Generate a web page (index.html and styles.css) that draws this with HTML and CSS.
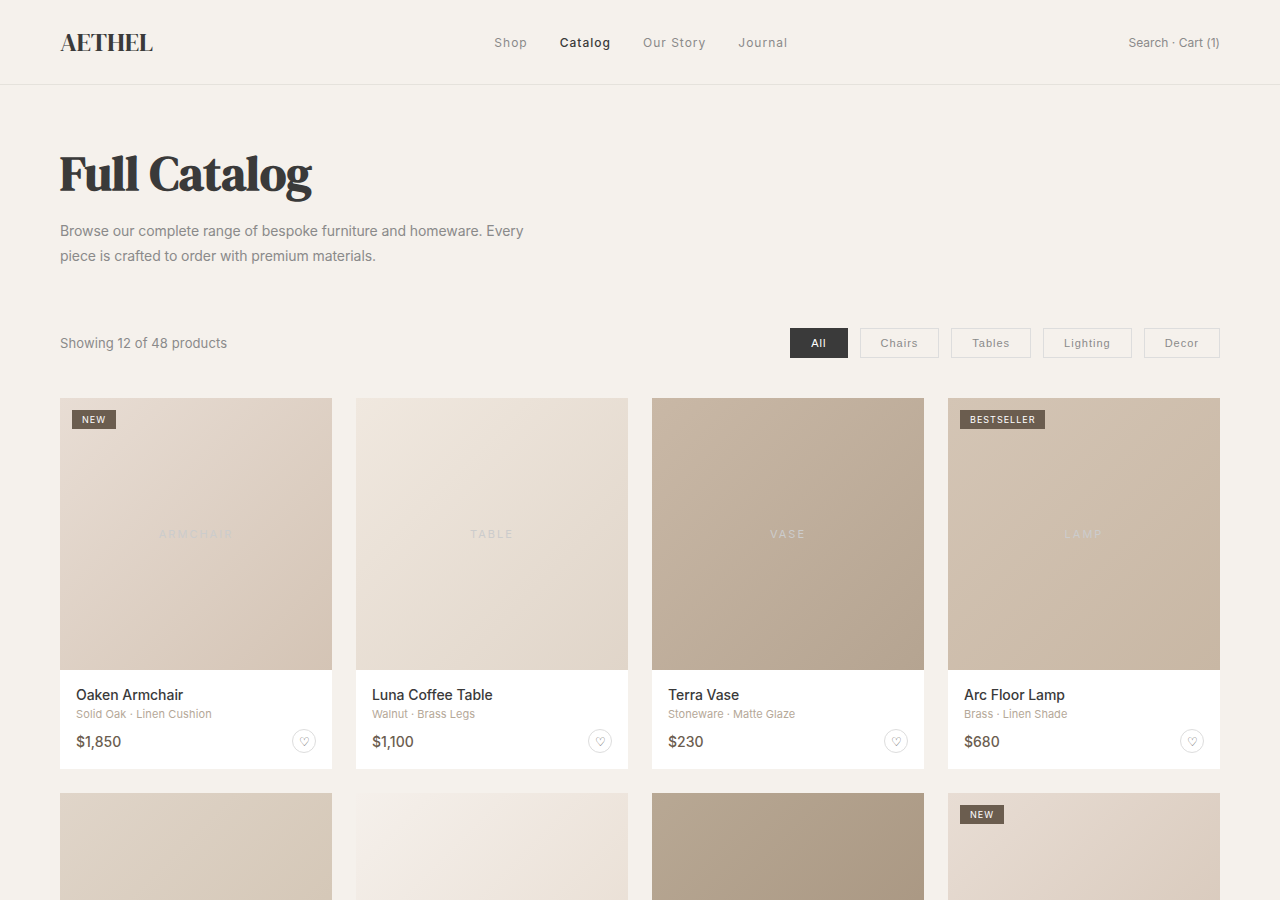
FILE: index.html
```html
<!DOCTYPE html>
<html lang="en">
<head>
<meta charset="utf-8">
<title>Aethel Catalog</title>
<link rel="stylesheet" href="styles.css">
</head>
<body>
<header class="header">
  <div class="logo">AETHEL</div>
  <nav class="nav"><a>Shop</a><a class="active">Catalog</a><a>Our Story</a><a>Journal</a></nav>
  <div class="actions">Search · Cart (1)</div>
</header>
<section class="hero">
  <h1>Full Catalog</h1>
  <p>Browse our complete range of bespoke furniture and homeware. Every piece is crafted to order with premium materials.</p>
</section>
<div class="toolbar">
  <span class="count">Showing 12 of 48 products</span>
  <div class="filters"><button class="filter on">All</button><button class="filter">Chairs</button><button class="filter">Tables</button><button class="filter">Lighting</button><button class="filter">Decor</button></div>
</div>
<main class="grid">
  <article class="card"><div class="image g1"><span class="badge">New</span>Armchair</div><div class="info"><h3>Oaken Armchair</h3><p class="wide">Solid Oak · Linen Cushion</p><div class="row"><span class="price">$1,850</span><span class="heart">♡</span></div></div></article>
  <article class="card"><div class="image g2">Table</div><div class="info"><h3>Luna Coffee Table</h3><p>Walnut · Brass Legs</p><div class="row"><span class="price">$1,100</span><span class="heart">♡</span></div></div></article>
  <article class="card"><div class="image g3">Vase</div><div class="info"><h3>Terra Vase</h3><p>Stoneware · Matte Glaze</p><div class="row"><span class="price">$230</span><span class="heart">♡</span></div></div></article>
  <article class="card"><div class="image g4"><span class="badge">Bestseller</span>Lamp</div><div class="info"><h3>Arc Floor Lamp</h3><p>Brass · Linen Shade</p><div class="row"><span class="price">$680</span><span class="heart">♡</span></div></div></article>
  <article class="card"><div class="image g5"></div></article>
  <article class="card"><div class="image g6"></div></article>
  <article class="card"><div class="image g7"></div></article>
  <article class="card"><div class="image g1"><span class="badge">New</span></div></article>
</main>
</body>
</html>
```
FILE: styles.css
```css
* { box-sizing: border-box; margin: 0; padding: 0; }
html { height: 900px; overflow: hidden; }
body { display: flex; flex-direction: column; height: 900px; overflow: hidden; background: #f5f1ec; color: #3a3a3a; font-family: Inter, sans-serif; }
.header { display: flex; flex: none; justify-content: space-between; align-items: center; height: 85px; padding: 0 60px; border-bottom: 1px solid #e5e2dc; }
.logo { font-family: "DM Serif Display", "Playfair Display", serif; font-size: 26px; letter-spacing: -0.2px; }
.nav { display: flex; gap: 32px; font-size: 12px; letter-spacing: 1px; padding-left: 1px; color: #8a8a8a; }
.active { color: #3a3a3a; font-weight: 500; }
.actions { font-size: 12px; letter-spacing: 0.02px; color: #8a8a8a; }
.hero { flex: none; padding: 60px 60px 0; }
.hero h1 { font-family: "DM Serif Display", serif; font-size: 48px; line-height: 57px; letter-spacing: 0.07px; margin-bottom: 16px; }
.hero p { width: 480px; font-size: 14px; line-height: 25.2px; letter-spacing: -0.08px; color: #8a8a8a; }
.toolbar { display: flex; flex: none; justify-content: space-between; align-items: center; height: 30px; margin: 60px 60px 40px; }
.count { font-size: 13px; letter-spacing: 0.11px; color: #8a8a8a; }
.filters { display: flex; gap: 12px; }
.filter { height: 30px; padding: 0 20px; border: 1px solid #ddd; background: transparent; font: 11px "Liberation Sans", sans-serif; letter-spacing: 1px; color: #8a8a8a; }
.filter.on { background: #3a3a3a; border-color: #3a3a3a; color: #fff; }
.grid { display: grid; flex: 1; min-height: 0; overflow: hidden; grid-template-columns: repeat(4, 1fr); grid-template-rows: 371px minmax(0, 1fr); gap: 24px; padding: 0 60px; }
.card { overflow: hidden; background: #fff; }
.image { position: relative; height: 272px; display: flex; align-items: center; justify-content: center; font-size: 11px; letter-spacing: 2px; text-transform: uppercase; color: #ccc; }
.badge { position: absolute; left: 12px; top: 12px; height: 19px; padding: 4px 10px; background: #6b5d4f; color: #fff; font-size: 9px; line-height: 11px; letter-spacing: 1px; }
.g1 { background: linear-gradient(135deg, #e8ddd4, #d4c4b5); }
.g2 { background: linear-gradient(135deg, #f0e8df, #e0d5c9); }
.g3 { background: linear-gradient(135deg, #c9b8a6, #b5a491); }
.g4 { background: linear-gradient(135deg, #d4c5b5, #c8b7a4); }
.g5 { background: linear-gradient(135deg, #e0d5c9, #d0c2b0); }
.g6 { background: linear-gradient(135deg, #f5f0eb, #e6dace); }
.g7 { background: linear-gradient(135deg, #b8a894, #a5927d); }
.info { height: 99px; padding: 16px; }
.info h3 { font-size: 14px; line-height: 17px; font-weight: 500; letter-spacing: -0.05px; margin-bottom: 4px; }
.info p { font-size: 11px; line-height: 14px; letter-spacing: 0.03px; color: #b5a898; margin-bottom: 8px; }
.info .wide { letter-spacing: 0.12px; }
.row { display: flex; justify-content: space-between; align-items: center; }
.price { font-size: 14px; font-weight: 500; color: #6b5d4f; }
.heart { display: flex; align-items: center; justify-content: center; width: 24px; height: 24px; padding: 1px 0 0 1px; border: 1px solid #ddd; border-radius: 50%; font-family: "Liberation Sans", "DejaVu Sans", sans-serif; font-size: 12px; color: #555; }
```
